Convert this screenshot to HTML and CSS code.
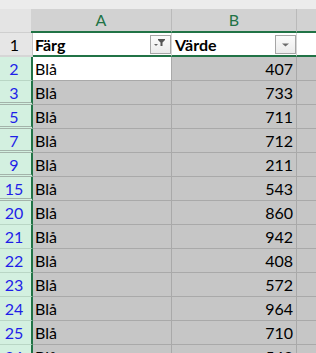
FILE: index.html
```html
<!DOCTYPE html>
<html lang="sv">
<head>
<meta charset="utf-8">
<title>Filter</title>
<link rel="stylesheet" href="styles.css">
</head>
<body>
<div class="top"></div>
<div class="hdr">
  <div class="corner"></div>
  <div class="ch cha">A</div>
  <div class="ch chb">B</div>
  <div class="ch chc"></div>
</div>
<div class="row r1">
  <div class="rh">1</div>
  <div class="c ca">
    <span class="txt">Färg</span>
    <span class="fb"><svg width="19" height="17" viewBox="0 0 19 17"><polygon points="7,3 14,3 14,4 11.5,6.5 11.5,10 9.5,10 9.5,6.5 7,4" fill="#555"/><polygon points="3,8 7,8 5,10" fill="#666"/></svg></span>
  </div>
  <div class="c cb">
    <span class="txt">Värde</span>
    <span class="fb"><svg width="19" height="17" viewBox="0 0 19 17"><polygon points="6,7.5 13,7.5 9.5,10.5" fill="#6b6b6b"/></svg></span>
  </div>
  <div class="c cc"></div>
</div>
<div class="row">
  <div class="rh sel">2</div>
  <div class="c ca active">Blå</div>
  <div class="c cb num">407</div>
  <div class="c cc"></div>
</div>
<div class="row">
  <div class="rh sel gap">3</div>
  <div class="c ca">Blå</div>
  <div class="c cb num">733</div>
  <div class="c cc"></div>
</div>
<div class="row">
  <div class="rh sel gap">5</div>
  <div class="c ca">Blå</div>
  <div class="c cb num">711</div>
  <div class="c cc"></div>
</div>
<div class="row">
  <div class="rh sel gap">7</div>
  <div class="c ca">Blå</div>
  <div class="c cb num">712</div>
  <div class="c cc"></div>
</div>
<div class="row">
  <div class="rh sel gap">9</div>
  <div class="c ca">Blå</div>
  <div class="c cb num">211</div>
  <div class="c cc"></div>
</div>
<div class="row">
  <div class="rh sel gap">15</div>
  <div class="c ca">Blå</div>
  <div class="c cb num">543</div>
  <div class="c cc"></div>
</div>
<div class="row">
  <div class="rh sel">20</div>
  <div class="c ca">Blå</div>
  <div class="c cb num">860</div>
  <div class="c cc"></div>
</div>
<div class="row">
  <div class="rh sel">21</div>
  <div class="c ca">Blå</div>
  <div class="c cb num">942</div>
  <div class="c cc"></div>
</div>
<div class="row">
  <div class="rh sel">22</div>
  <div class="c ca">Blå</div>
  <div class="c cb num">408</div>
  <div class="c cc"></div>
</div>
<div class="row">
  <div class="rh sel">23</div>
  <div class="c ca">Blå</div>
  <div class="c cb num">572</div>
  <div class="c cc"></div>
</div>
<div class="row">
  <div class="rh sel">24</div>
  <div class="c ca">Blå</div>
  <div class="c cb num">964</div>
  <div class="c cc"></div>
</div>
<div class="row">
  <div class="rh sel">25</div>
  <div class="c ca">Blå</div>
  <div class="c cb num">710</div>
  <div class="c cc"></div>
</div>
<div class="row">
  <div class="rh sel">26</div>
  <div class="c ca">Blå</div>
  <div class="c cb num">543</div>
  <div class="c cc"></div>
</div>
</body>
</html>
```
FILE: styles.css
```css
* { box-sizing: border-box; }
html, body {
  margin: 0;
  padding: 0;
  width: 316px;
  height: 353px;
  overflow: hidden;
  background: #ffffff;
  font-family: Lato, "Open Sans", sans-serif;
  font-size: 16px;
  color: #000;
}
.top {
  height: 9px;
  background: #ececec;
}
.hdr {
  display: flex;
  height: 24px;
}
.corner {
  width: 31px;
  background: #e4e4e4;
  border-bottom: 1px solid #cfcfcf;
}
.ch {
  height: 24px;
  background: #d2d2d2;
  color: #217346;
  border-bottom: 2px solid #217346;
  border-right: 1px solid #bababa;
  text-align: center;
  line-height: 22px;
}
.cha { width: 141px; }
.chb { width: 125px; }
.chc { flex: 1; border-right: none; }

.row {
  display: flex;
  height: 24px;
}
.rh {
  width: 33px;
  padding-right: 3px;
  text-align: center;
  background: #e6e6e6;
  border-right: 1px solid #c4c4c4;
  border-bottom: 2px solid #d6d6d6;
  padding-top: 1px;
  line-height: 22px;
}
.rh.sel {
  background: #d3f0e0;
  color: #1f1fe8;
  border-right: 2px solid #217346;
  border-bottom: 1px solid #b9d6c5;
  line-height: 22px;
}
.rh.gap {
  border-bottom: 3px double #a3b3aa;
}
.c {
  background: #c6c6c6;
  border-right: 1px solid #a9a9a9;
  border-bottom: 1px solid #a9a9a9;
  padding: 1px 3px 0 2px;
  line-height: 22px;
  white-space: nowrap;
  overflow: hidden;
}
.ca { width: 139px; }
.cb { width: 125px; padding-left: 3px; }
.cc { flex: 1; border-right: none; }
.num { text-align: right; }
.c.active { background: #ffffff; }

.r1 .c {
  background: #ffffff;
  border-right-color: #d4d4d4;
  border-bottom: 2px solid #217346;
  display: flex;
  align-items: flex-start;
  padding: 0 0 0 2px;
  font-weight: 700;
}
.r1 .cb { padding-left: 3px; }
.r1 .txt {
  padding-top: 2px;
  line-height: 20px;
}
.fb {
  margin-left: auto;
  margin-top: 2px;
  width: 21px;
  height: 19px;
  border: 1px solid #a6a6a6;
  background: linear-gradient(#fbfbfb, #ebebeb);
  display: flex;
}
```
